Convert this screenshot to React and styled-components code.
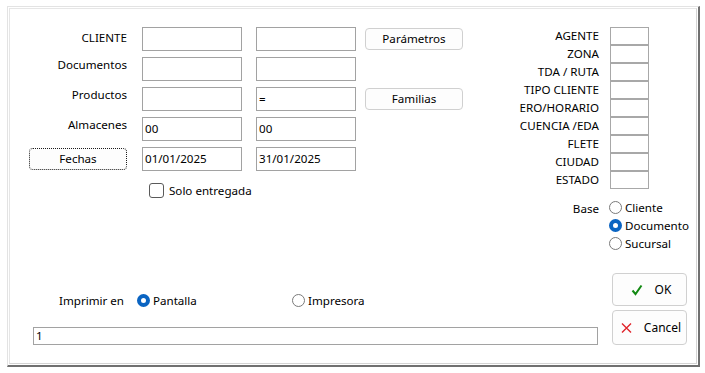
import React from "react";
import { createGlobalStyle, styled } from "styled-components";

const GlobalStyle = createGlobalStyle`
  html, body {
    margin: 0;
    background: #ffffff;
  }
  body {
    font-family: "Noto Sans", "Open Sans", sans-serif;
    font-size: 11.6px;
    color: #000000;
  }
`;

const filtros = [
  { label: "CLIENTE", a: "", b: "", top: 3, boton: "Parámetros" },
  { label: "Documentos", a: "", b: "" },
  { label: "Productos", a: "", b: "=", boton: "Familias" },
  { label: "Almacenes", a: "00", b: "00" },
];

// los dos largos se ven cortados en la ventana original
const parametros = [
  "AGENTE",
  "ZONA",
  "TDA / RUTA",
  "TIPO CLIENTE",
  "ERO/HORARIO",
  "CUENCIA /EDA",
  "FLETE",
  "CIUDAD",
  "ESTADO",
];

const bases = [
  { label: "Cliente", checked: false },
  { label: "Documento", checked: true },
  { label: "Sucursal", checked: false },
];

const App = () => {
  return (
    <>
      <GlobalStyle />
      <Window>
        <Panel>
          <Body>
            <TopRow>
              <FormGrid>
                {filtros.map((f) => (
                  <React.Fragment key={f.label}>
                    <FieldLabel $top={f.top || 0}>{f.label}</FieldLabel>
                    <TextBox>{f.a}</TextBox>
                    <TextBox>{f.b}</TextBox>
                    {f.boton ? <PushButton>{f.boton}</PushButton> : <span />}
                  </React.Fragment>
                ))}
                <PushButton $focus>Fechas</PushButton>
                <TextBox>01/01/2025</TextBox>
                <TextBox>31/01/2025</TextBox>
                <span />
                <span />
                <CheckRow>
                  <CheckBox />
                  Solo entregada
                </CheckRow>
              </FormGrid>

              <SideColumn>
                <ParamGrid>
                  {parametros.map((p) => (
                    <React.Fragment key={p}>
                      <ParamLabel>{p}</ParamLabel>
                      <ParamBox />
                    </React.Fragment>
                  ))}
                </ParamGrid>
                <BaseGroup>
                  <BaseLabel>Base</BaseLabel>
                  <RadioList>
                    {bases.map((b) => (
                      <RadioOption key={b.label}>
                        <RadioDot $checked={b.checked} />
                        {b.label}
                      </RadioOption>
                    ))}
                  </RadioList>
                </BaseGroup>
              </SideColumn>
            </TopRow>

            <BottomRow>
              <PrintArea>
                <PrintRow>
                  <PrintLabel>Imprimir en</PrintLabel>
                  <RadioOption $width={155}>
                    <RadioDot $checked />
                    Pantalla
                  </RadioOption>
                  <RadioOption>
                    <RadioDot />
                    Impresora
                  </RadioOption>
                </PrintRow>
                <LongField>1</LongField>
              </PrintArea>
              <ActionColumn>
                <ActionButton $h={33}>
                  <svg width="12" height="12" viewBox="0 0 12 12">
                    <path d="M1.5 6.5 L4.5 10 L10.5 1.5" fill="none" stroke="#138a13" strokeWidth="2" />
                  </svg>
                  <span>OK</span>
                </ActionButton>
                <ActionButton $h={35}>
                  <svg width="11" height="12" viewBox="0 0 11 12">
                    <path d="M1 1.5 L10 10.5 M10 1.5 L1 10.5" fill="none" stroke="#e0242b" strokeWidth="1.4" />
                  </svg>
                  <span>Cancel</span>
                </ActionButton>
              </ActionColumn>
            </BottomRow>
          </Body>
        </Panel>
      </Window>
    </>
  );
};

export default App;

const Window = styled.div`
  box-sizing: border-box;
  margin: 6px 0 0 7px;
  width: 693px;
  height: 361px;
  padding: 1px;
  border: 1px solid #e3e3e3;
  border-right: 2px solid #707070;
  border-bottom: 2px solid #707070;
`;

const Panel = styled.div`
  box-sizing: border-box;
  height: 100%;
  border: 1px solid #e6e6e6;
  border-right-color: #d4d4d4;
  border-bottom-color: #d4d4d4;
`;

const Body = styled.div`
  padding: 18px 0 0 19px;
  display: flex;
  flex-direction: column;
`;

const TopRow = styled.div`
  display: flex;
  align-items: flex-start;
  gap: 56px;
`;

const FormGrid = styled.div`
  display: grid;
  grid-template-columns: 113px 114px 109px 98px;
  grid-auto-rows: 24px;
  row-gap: 6px;
`;

const FieldLabel = styled.div`
  align-self: start;
  padding-top: ${(p) => p.$top}px;
  padding-right: 15px;
  line-height: 16px;
  text-align: right;
  white-space: nowrap;
`;

const TextBox = styled.div`
  box-sizing: border-box;
  width: 100px;
  height: 24px;
  border: 1px solid #a2a2a2;
  background: #ffffff;
  padding: 0 2px;
  line-height: 22px;
  white-space: nowrap;
  overflow: hidden;
`;

const PushButton = styled.div`
  box-sizing: border-box;
  width: 98px;
  height: 22px;
  align-self: center;
  border: 1px ${(p) => (p.$focus ? "dotted #1c1c1c" : "solid #d0d0d0")};
  border-radius: 4px;
  background: #fdfdfd;
  display: flex;
  align-items: center;
  justify-content: center;
  line-height: 16px;
`;

const CheckRow = styled.div`
  grid-column: 2 / 4;
  margin-left: 7px;
  margin-top: 3px;
  display: flex;
  align-items: center;
  gap: 5px;
`;

const CheckBox = styled.span`
  box-sizing: border-box;
  width: 15px;
  height: 15px;
  border: 1px solid #5a5a5a;
  border-radius: 3px;
  background: #ffffff;
`;

const SideColumn = styled.div`
  display: flex;
  flex-direction: column;
  gap: 9px;
`;

const ParamGrid = styled.div`
  display: grid;
  grid-template-columns: 80px 39px;
  grid-auto-rows: 18px;
  column-gap: 11px;
`;

const ParamLabel = styled.div`
  display: flex;
  justify-content: flex-end;
  align-items: center;
  white-space: nowrap;
  line-height: 16px;
`;

const ParamBox = styled.div`
  box-sizing: border-box;
  border: 1px solid #a8a8a8;
  background: #ffffff;
`;

const BaseGroup = styled.div`
  display: grid;
  grid-template-columns: 80px auto;
  column-gap: 10px;
`;

const BaseLabel = styled.div`
  text-align: right;
  padding-top: 2px;
  line-height: 18px;
`;

const RadioList = styled.div`
  display: flex;
  flex-direction: column;
`;

const RadioOption = styled.div`
  display: flex;
  align-items: center;
  gap: 3px;
  height: 18px;
  width: ${(p) => (p.$width ? `${p.$width}px` : "auto")};
  white-space: nowrap;
`;

const RadioDot = styled.span`
  box-sizing: border-box;
  width: 13px;
  height: 13px;
  border-radius: 50%;
  flex-shrink: 0;
  border: ${(p) => (p.$checked ? "4px solid #0a64c2" : "1px solid #7a7a7a")};
  background: #ffffff;
`;

const BottomRow = styled.div`
  display: grid;
  grid-template-columns: 565px 75px;
  column-gap: 14px;
  margin-top: 21px;
  margin-left: 4px;
`;

const PrintArea = styled.div`
  display: flex;
  flex-direction: column;
  padding-top: 18px;
`;

const PrintRow = styled.div`
  display: flex;
  align-items: center;
  padding-left: 26px;
  height: 18px;
`;

const PrintLabel = styled.div`
  width: 78px;
`;

const LongField = styled.div`
  box-sizing: border-box;
  margin-top: 18px;
  height: 18px;
  border: 1px solid #a2a2a2;
  padding: 0 2px;
  line-height: 16px;
`;

const ActionColumn = styled.div`
  display: flex;
  flex-direction: column;
  gap: 4px;
`;

const ActionButton = styled.div`
  box-sizing: border-box;
  height: ${(p) => p.$h}px;
  border: 1px solid #d0d0d0;
  border-radius: 4px;
  background: #fdfdfd;
  display: flex;
  align-items: center;
  justify-content: center;
  gap: 12px;
  padding-left: 3px;
  font-size: 12px;
  svg {
    flex-shrink: 0;
  }
`;
